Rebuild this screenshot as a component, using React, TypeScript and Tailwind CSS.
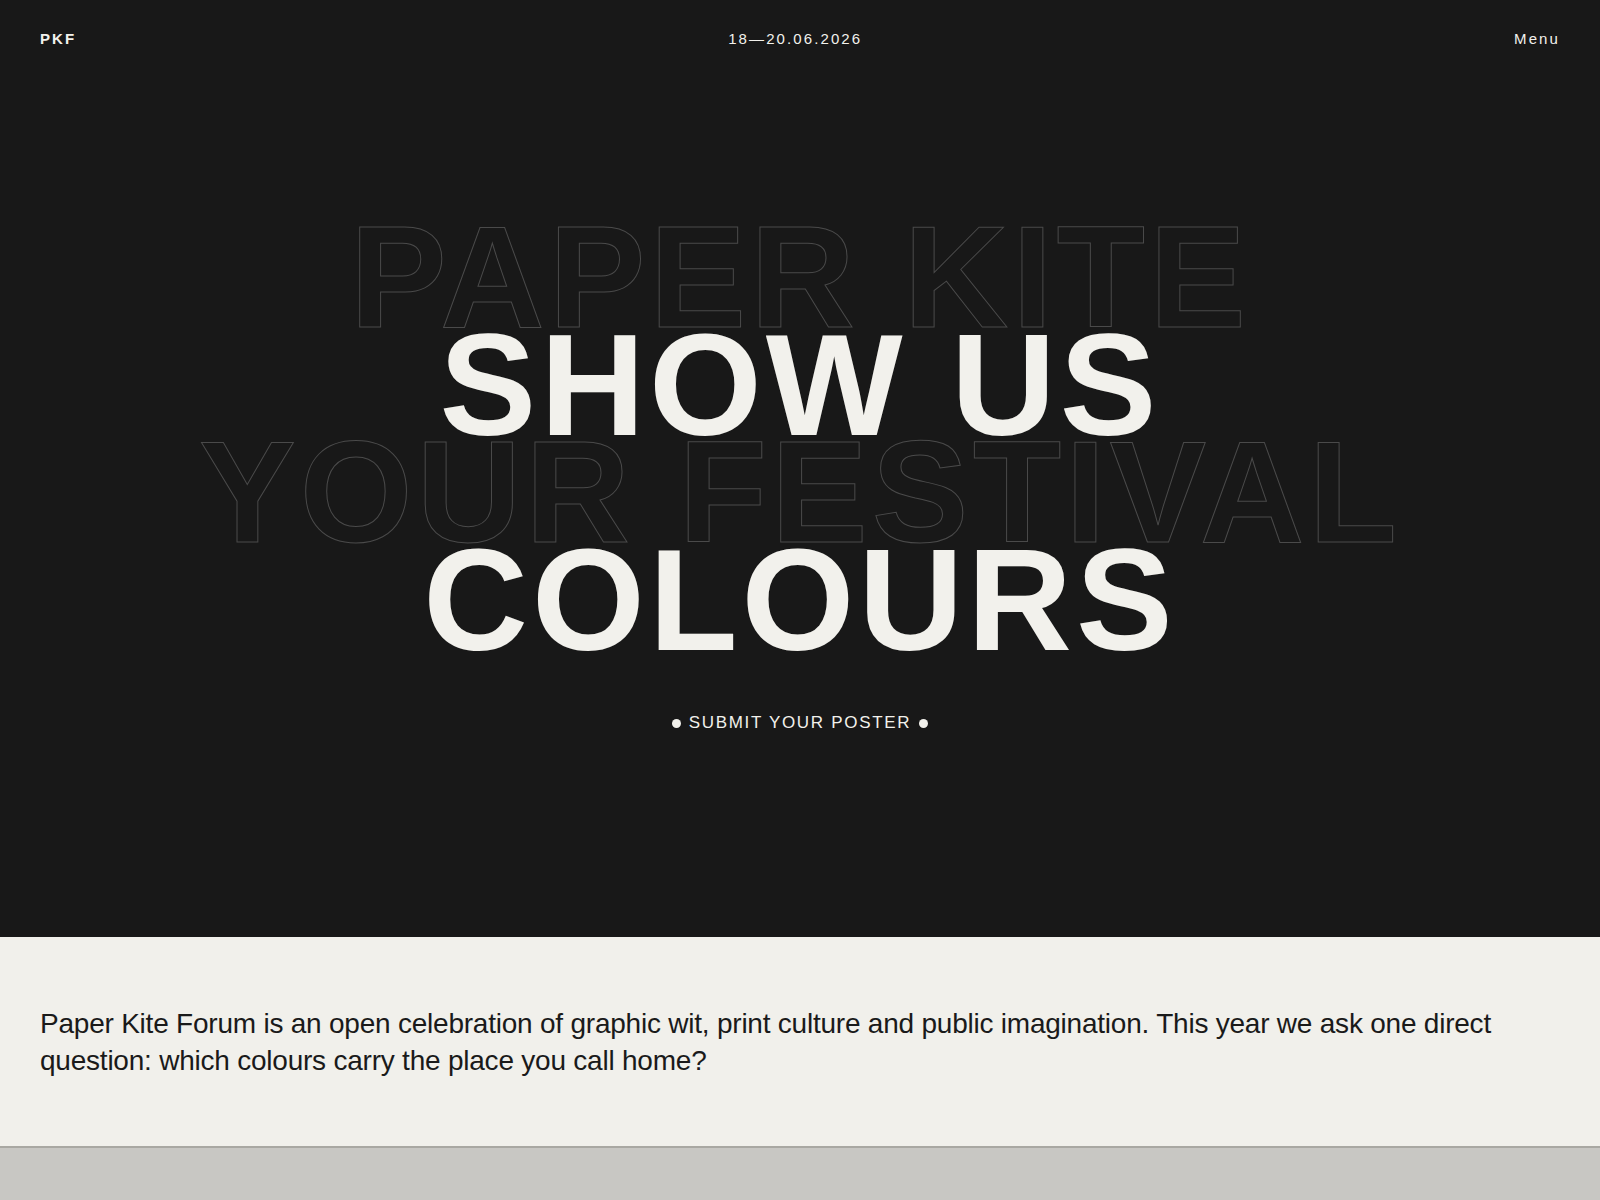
const lines: { text: string; outline: boolean }[] = [
  { text: 'PAPER KITE', outline: true },
  { text: 'SHOW US', outline: false },
  { text: 'YOUR FESTIVAL', outline: true },
  { text: 'COLOURS', outline: false },
];

export default function App() {
  return (
    <div className="min-h-[1200px] bg-[#c8c7c3] font-['Liberation_Sans',Arial,sans-serif]">
      {/* Hero */}
      <section className="flex h-[937px] flex-col bg-[#181818] text-[#f2f1ec]">
        <header className="flex items-center justify-between px-10 pt-[30px] text-[15px] leading-[18px] tracking-[0.14em]">
          <span className="font-bold">PKF</span>
          <span>18—20.06.2026</span>
          <span>Menu</span>
        </header>

        <h1 className="mt-[176px] flex flex-col items-center text-[145px] font-bold leading-[107.5px] tracking-[0.028em] whitespace-nowrap">
          {lines.map((line) =>
            line.outline ? (
              <span
                key={line.text}
                className="text-transparent [-webkit-text-stroke:1px_#4a4a4a]"
              >
                {line.text}
              </span>
            ) : (
              <span key={line.text} className="relative text-[#f2f1ec]">
                {line.text}
              </span>
            )
          )}
        </h1>

        <a
          href="#"
          className="mx-auto mt-[57px] flex items-center gap-[8px] text-[17px] leading-[24px] tracking-[0.1em]"
        >
          <span className="h-[9px] w-[9px] rounded-full bg-[#f2f1ec]" />
          <span>SUBMIT YOUR POSTER</span>
          <span className="h-[9px] w-[9px] rounded-full bg-[#f2f1ec]" />
        </a>
      </section>

      {/* Intro */}
      <section className="bg-[#f1f0eb] px-10 pt-[68px] pb-[67px] text-[#1a1a1a]">
        <p className="text-[28px] leading-[37px] tracking-[-0.008em]">
          Paper Kite Forum is an open celebration of graphic wit, print culture and public
          imagination. This year we ask one direct question: which colours carry the place you
          call home?
        </p>
      </section>

      <div className="h-[54px] border-t-2 border-[#a9a8a2] bg-[#c8c7c3]" />
    </div>
  );
}
